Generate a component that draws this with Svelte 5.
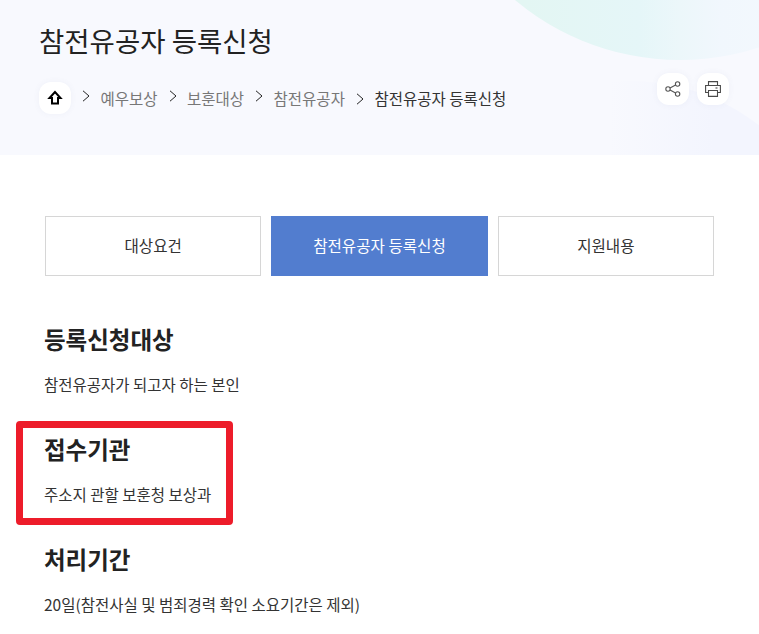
<script>
	const crumbs = ['예우보상', '보훈대상', '참전유공자', '참전유공자 등록신청'];
	const tabs = [
		{ label: '대상요건', active: false },
		{ label: '참전유공자 등록신청', active: true },
		{ label: '지원내용', active: false }
	];
	const sections = [
		{ title: '등록신청대상', body: '참전유공자가 되고자 하는 본인' },
		{ title: '접수기관', body: '주소지 관할 보훈청 보상과', marked: true },
		{ title: '처리기간', body: '20일(참전사실 및 범죄경력 확인 소요기간은 제외)' }
	];
</script>

<div class="page">
	<header class="visual">
		<div class="blob mint"></div>
		<div class="blob lilac"></div>
		<h1>참전유공자 등록신청</h1>
		<div class="tools">
			<button class="round" aria-label="공유">
				<svg width="16" height="16" viewBox="0 0 16 16" fill="none" stroke="#555" stroke-width="1.1">
					<circle cx="3" cy="8" r="2.2" />
					<circle cx="12.6" cy="3" r="2.2" />
					<circle cx="12.6" cy="13" r="2.2" />
					<path d="M5 7 10.6 4M5 9 10.6 12" />
				</svg>
			</button>
			<button class="round" aria-label="인쇄">
				<svg width="16" height="16" viewBox="0 0 16 16" fill="none" stroke="#4a4a4a" stroke-width="1.1">
					<path d="M3.5 4.5V.6h9v3.9M3.5 11.5H.6v-7h14.8v7h-2.9" />
					<path d="M3.5 9.5h9v5.9h-9z" />
					<path d="M10.5 7h2" />
				</svg>
			</button>
		</div>
		<nav class="crumbs">
			<button class="round" aria-label="홈">
				<svg width="16" height="16" viewBox="0 0 16 16" fill="none" stroke="#000" stroke-width="2">
					<path d="M8 2 2.5 8H5v5.5h6V8h2.5z" />
				</svg>
			</button>
			{#each crumbs as crumb, i}
				<svg class="chev" class:low={i === 3} width="9" height="12" viewBox="0 0 9 12" fill="none" stroke="#222" stroke-width="1">
					<path d="M1 .8 7 6 1 11.2" />
				</svg>
				<span class="crumb" class:current={i === crumbs.length - 1}>{crumb}</span>
			{/each}
		</nav>
	</header>

	<main>
		<div class="tabs">
			{#each tabs as tab}
				<button class="tab" class:active={tab.active}>{tab.label}</button>
			{/each}
		</div>

		{#each sections as s}
			<section class:marked={s.marked}>
				<h2>{s.title}</h2>
				<p>{s.body}</p>
			</section>
		{/each}
	</main>
</div>

<style>
	:global(body) {
		margin: 0;
		background: #fff;
		overflow: hidden;
	}

	.page {
		width: 759px;
		height: 634px;
		overflow: hidden;
		font-family: 'Noto Sans CJK KR', 'Noto Sans', sans-serif;
		color: #222;
	}

	.visual {
		position: relative;
		height: 155px;
		box-sizing: border-box;
		padding: 19px 30px 0 40px;
		background: #f8f9fe;
		overflow: hidden;
	}

	.blob {
		position: absolute;
		border-radius: 50%;
	}

	.mint {
		left: 423px;
		top: -454px;
		width: 514px;
		height: 514px;
		background: linear-gradient(90deg, #e3f6f3 20%, #e5f6f8 42%, #ecf7fa 50%, #f1f7fd 58%, #f3f8fd 70%);
	}

	.lilac {
		left: 420px;
		top: 81px;
		width: 420px;
		height: 420px;
		background: linear-gradient(90deg, rgba(243, 245, 254, 0) 45%, #f3f5fe 70%);
	}

	h1 {
		position: relative;
		margin: 0 0 0 -1px;
		font-size: 27.5px;
		line-height: 42px;
		font-weight: 400;
		color: #222;
	}

	.tools {
		position: absolute;
		top: 73px;
		right: 30px;
		display: flex;
		gap: 8px;
	}

	.round {
		display: flex;
		align-items: center;
		justify-content: center;
		width: 32px;
		height: 32px;
		padding: 0;
		border: 0;
		border-radius: 12px;
		background: #fff;
		box-shadow: 0 0 6px rgba(90, 100, 150, 0.06);
	}

	.crumbs {
		position: relative;
		display: flex;
		align-items: center;
		margin: 21px 0 0 -1px;
		font-size: 15.5px;
		color: #777;
	}

	.chev {
		margin: -5px 9.5px 0 11px;
	}

	.chev.low {
		margin-top: 1px;
	}

	.crumb.current {
		color: #333;
	}

	main {
		padding: 61px 45px 0;
	}

	.tabs {
		display: flex;
		gap: 10px;
		margin-bottom: 45px;
	}

	.tab {
		flex: 1;
		height: 60px;
		padding: 0 0 2px;
		border: 1px solid #d6d6d6;
		background: #fff;
		font: inherit;
		font-size: 15.6px;
		color: #333;
	}

	.tab.active {
		border-color: #527dcf;
		background: #527dcf;
		color: #fff;
	}

	section {
		position: relative;
		height: 110px;
	}

	section.marked::before {
		content: '';
		position: absolute;
		left: -29px;
		top: -10px;
		width: 217px;
		height: 104px;
		box-sizing: border-box;
		border: 7px solid #ed1c2a;
		border-radius: 4px;
	}

	h2 {
		margin: 0 0 0 -1px;
		font-size: 23.5px;
		line-height: 36px;
		font-weight: 700;
		color: #222;
	}

	p {
		margin: 15px 0 0 -1px;
		font-size: 15.5px;
		line-height: 24px;
		color: #333;
	}
</style>
